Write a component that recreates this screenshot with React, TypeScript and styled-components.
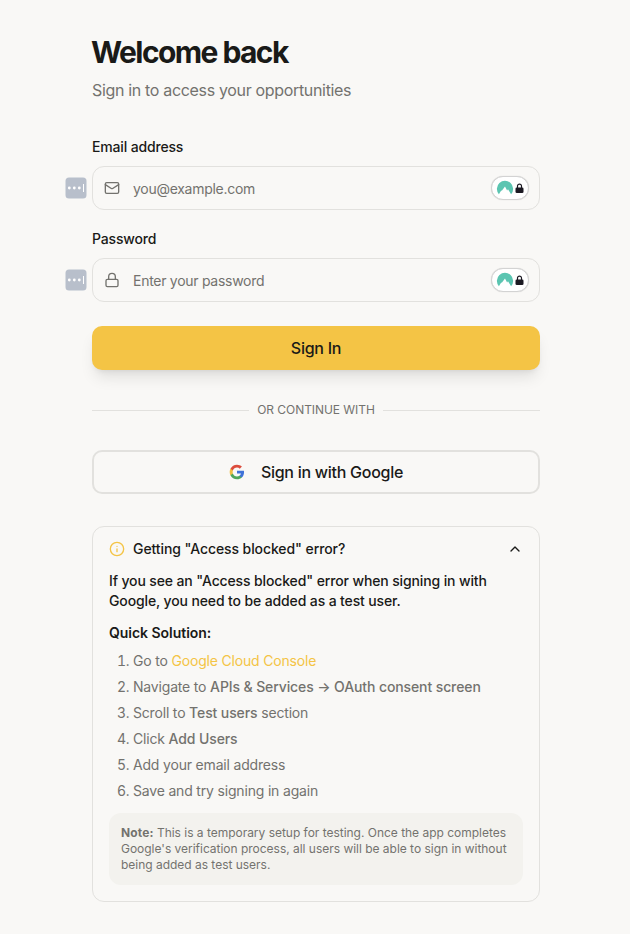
import React from "react";
import styled, { createGlobalStyle } from "styled-components";
import { ChevronUp, Info, Lock, Mail } from "lucide-react";

const GlobalStyle = createGlobalStyle`
  *, *::before, *::after { box-sizing: border-box; }
  body {
    margin: 0;
    background: #f9f8f6;
    color: #1a1a18;
    font-family: Inter, "Liberation Sans", sans-serif;
    font-size: 14px;
    line-height: 20px;
    -webkit-font-smoothing: antialiased;
  }
`;

const Page = styled.main`
  width: 448px;
  margin-left: 92px;
  padding: 34px 0 32px;
`;

const Title = styled.h1`
  margin: 0 0 0 -1px;
  font-size: 30px;
  line-height: 36px;
  font-weight: 700;
  letter-spacing: -1.58px;
`;

const Subtitle = styled.p`
  margin: 8px 0 0;
  font-size: 16px;
  line-height: 24px;
  letter-spacing: -0.33px;
  color: #73726e;
`;

const Form = styled.form`
  display: flex;
  flex-direction: column;
  gap: 19px;
  margin-top: 35px;
`;

const Field = styled.div`
  display: flex;
  flex-direction: column;
  gap: 9px;
`;

const Label = styled.label`
  font-weight: 500;
  letter-spacing: -0.16px;
`;

const InputShell = styled.div`
  position: relative;
  display: flex;
  align-items: center;
  height: 44px;
  padding: 0 10px 0 11px;
  border: 1px solid #e2e1de;
  border-radius: 12px;
  color: #73726e;
`;

const Input = styled.input`
  flex: 1;
  min-width: 0;
  margin-left: 13px;
  padding: 2px 0 0;
  border: 0;
  outline: 0;
  background: transparent;
  color: inherit;
  font: inherit;
  letter-spacing: -0.28px;
  &::placeholder { color: #73726e; opacity: 1; }
`;

const AutofillTag = styled.span`
  position: absolute;
  left: -28px;
  top: 10px;
  display: flex;
`;

const VaultBadge = styled.span`
  display: flex;
  align-items: center;
  gap: 1px;
  width: 38px;
  height: 24px;
  padding-left: 4px;
  border: 1px solid #d3d3d3;
  border-radius: 12px;
  background: #fff;
  box-shadow: 0 0 1px rgba(0, 0, 0, 0.2);
`;

const PrimaryButton = styled.button`
  height: 44px;
  margin-top: 5px;
  padding: 0;
  border: 0;
  border-radius: 10px;
  background: #f4c445;
  color: #1a1a18;
  font: 500 16px/24px Inter, sans-serif;
  letter-spacing: -0.25px;
  box-shadow: 0 10px 15px -3px rgba(0, 0, 0, 0.1), 0 4px 6px -4px rgba(0, 0, 0, 0.1);
`;

const Divider = styled.div`
  display: flex;
  align-items: center;
  gap: 8px;
  margin-top: 32px;
  font-size: 12px;
  line-height: 16px;
  letter-spacing: -0.06px;
  color: #73726e;
  text-transform: uppercase;
  &::before, &::after {
    content: "";
    flex: 1;
    height: 1px;
    background: #e2e1de;
  }
`;

const GoogleButton = styled.button`
  display: flex;
  align-items: center;
  justify-content: center;
  gap: 16px;
  width: 100%;
  height: 44px;
  margin-top: 32px;
  padding: 0;
  border: 2px solid #e2e1de;
  border-radius: 10px;
  background: transparent;
  color: #1a1a18;
  font: 500 16px/24px Inter, sans-serif;
  letter-spacing: -0.27px;
`;

const HelpCard = styled.section`
  height: 376px;
  margin-top: 32px;
  padding: 12px 16px 16px;
  border: 1px solid #e2e1de;
  border-radius: 12px;
`;

const HelpHeader = styled.header`
  display: flex;
  align-items: center;
  gap: 8px;
  font-weight: 500;
  letter-spacing: -0.09px;
  svg:last-child { margin-left: auto; }
`;

const HelpText = styled.p`
  margin: 12px 0 0;
  font-weight: 500;
  letter-spacing: -0.13px;
`;

const HelpHeading = styled.h2`
  margin: 12px 0 0;
  font-size: 14px;
  line-height: 20px;
  font-weight: 600;
  letter-spacing: -0.03px;
`;

const Steps = styled.ol`
  display: flex;
  flex-direction: column;
  gap: 6px;
  margin: 8px 0 0;
  padding: 0 0 0 24px;
  color: #73726e;
  letter-spacing: -0.18px;
  strong { font-weight: 500; letter-spacing: -0.11px; }
`;

const ConsoleLink = styled.a`
  color: #f4c445;
  text-decoration: none;
`;

const Note = styled.p`
  margin: 12px 0 0;
  padding: 12px;
  border-radius: 12px;
  background: #f3f2ee;
  color: #73726e;
  font-size: 12px;
  line-height: 16px;
  letter-spacing: -0.02px;
  strong { letter-spacing: 0.12px; }
`;

function AutofillIcon() {
  return (
    <AutofillTag>
      <svg width="22" height="22" viewBox="0 0 22 22">
        <rect x="0.5" y="0.5" width="21" height="21" rx="3.5" fill="#b8bfcb" />
        <circle cx="4.3" cy="11" r="1.4" fill="#fff" />
        <circle cx="9.3" cy="11" r="1.4" fill="#fff" />
        <circle cx="14.3" cy="11" r="1.4" fill="#fff" />
        <path d="M18.5 7v8" stroke="#fff" strokeWidth="1" />
      </svg>
    </AutofillTag>
  );
}

function Vault() {
  return (
    <VaultBadge>
      <svg width="18" height="16" viewBox="0 0 18 16">
        <path
          d="M2.9 14.2A8.1 8.1 0 1 1 15.1 14.2L12 9.3 11.1 10.5 9 6.4 5.8 10.8 5.2 10.5Z"
          fill="#5bc5b1"
        />
      </svg>
      <svg width="9" height="11" viewBox="0 0 9 11">
        <path d="M2.5 5V3.1a2 2 0 0 1 4 0V5" fill="none" stroke="#1b1922" strokeWidth="1.2" />
        <rect x="0.5" y="4.4" width="8" height="5.7" rx="1.3" fill="#1b1922" />
      </svg>
    </VaultBadge>
  );
}

function GoogleLogo() {
  return (
    <svg width="16" height="16" viewBox="0 0 24 24">
      <path fill="#3f72d8" d="M22.56 12.25c0-.78-.07-1.53-.2-2.25H12v4.26h5.92c-.26 1.37-1.04 2.53-2.21 3.31v2.77h3.57c2.08-1.92 3.28-4.74 3.28-8.09z" />
      <path fill="#4fa65b" d="M12 23c2.97 0 5.46-.98 7.28-2.66l-3.57-2.77c-.98.66-2.23 1.06-3.71 1.06-2.86 0-5.29-1.93-6.16-4.53H2.18v2.84C3.99 20.53 7.7 23 12 23z" />
      <path fill="#f0bd42" d="M5.84 14.09c-.22-.66-.35-1.36-.35-2.09s.13-1.43.35-2.09V7.07H2.18C1.43 8.55 1 10.22 1 12s.43 3.45 1.18 4.93l3.66-2.84z" />
      <path fill="#dc4c3c" d="M12 5.38c1.62 0 3.06.56 4.21 1.64l3.15-3.15C17.45 2.09 14.97 1 12 1 7.7 1 3.99 3.47 2.18 7.07l3.66 2.84c.87-2.6 3.3-4.53 6.16-4.53z" />
    </svg>
  );
}

export default function App() {
  return (
    <>
      <GlobalStyle />
      <Page>
        <Title>Welcome back</Title>
        <Subtitle>Sign in to access your opportunities</Subtitle>
        <Form>
          <Field>
            <Label htmlFor="email">Email address</Label>
            <InputShell>
              <AutofillIcon />
              <Mail size={16} strokeWidth={2} />
              <Input id="email" type="email" placeholder="you@example.com" />
              <Vault />
            </InputShell>
          </Field>
          <Field>
            <Label htmlFor="password">Password</Label>
            <InputShell>
              <AutofillIcon />
              <Lock size={16} strokeWidth={2} />
              <Input id="password" type="password" placeholder="Enter your password" />
              <Vault />
            </InputShell>
          </Field>
          <PrimaryButton type="button">Sign In</PrimaryButton>
        </Form>
        <Divider>Or continue with</Divider>
        <GoogleButton type="button">
          <GoogleLogo />
          Sign in with Google
        </GoogleButton>
        <HelpCard>
          <HelpHeader>
            <Info size={16} color="#f4c445" />
            Getting "Access blocked" error?
            <ChevronUp size={16} />
          </HelpHeader>
          <HelpText>
            If you see an "Access blocked" error when signing in with Google, you need to be added as a test user.
          </HelpText>
          <HelpHeading>Quick Solution:</HelpHeading>
          <Steps>
            <li>Go to <ConsoleLink>Google Cloud Console</ConsoleLink></li>
            <li>Navigate to <strong>APIs &amp; Services → OAuth consent screen</strong></li>
            <li>Scroll to <strong>Test users</strong> section</li>
            <li>Click <strong>Add Users</strong></li>
            <li>Add your email address</li>
            <li>Save and try signing in again</li>
          </Steps>
          <Note>
            <strong>Note:</strong> This is a temporary setup for testing. Once the app completes Google's verification process, all users will be able to sign in without being added as test users.
          </Note>
        </HelpCard>
      </Page>
    </>
  );
}
